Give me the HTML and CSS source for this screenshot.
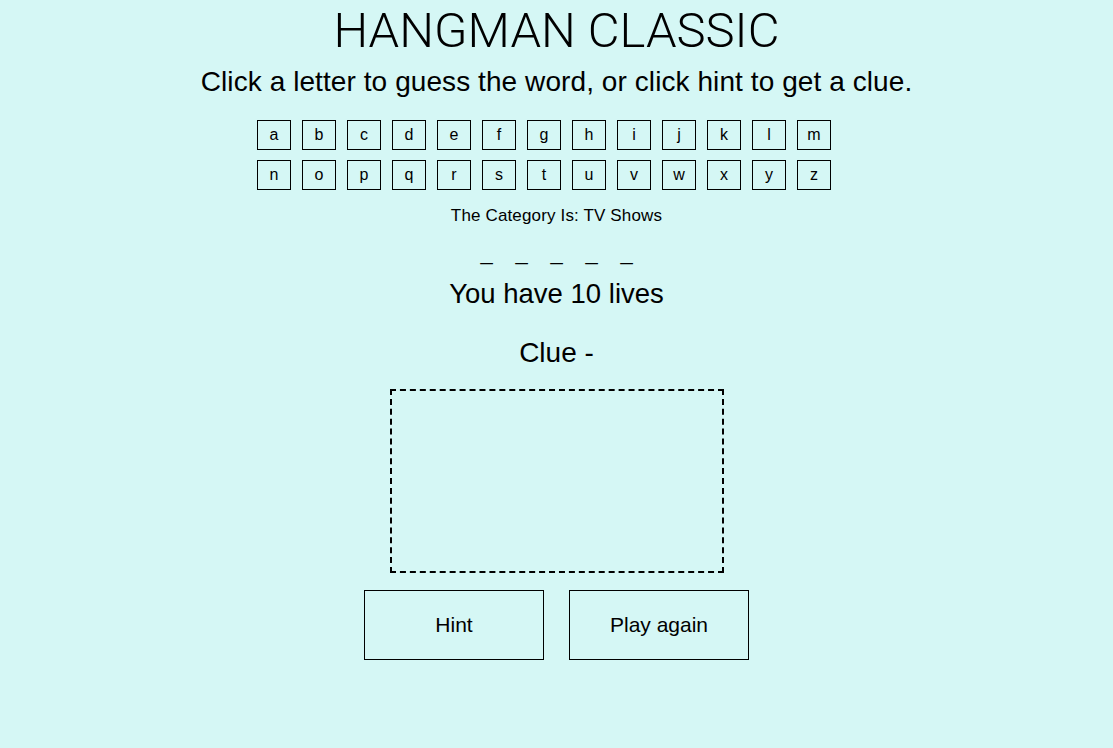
FILE: index.html
```html
<!DOCTYPE html>
<html lang="en">
<head>
<meta charset="utf-8">
<title>Hangman Classic</title>
<link rel="stylesheet" href="styles.css">
</head>
<body>
<div class="page">
  <h1 class="title">HANGMAN CLASSIC</h1>
  <p class="intro">Click a letter to guess the word, or click hint to get a clue.</p>
  <div class="alphabet">
    <ul class="letters">
      <li class="letter">a</li><li class="letter">b</li><li class="letter">c</li><li class="letter">d</li><li class="letter">e</li><li class="letter">f</li><li class="letter">g</li><li class="letter">h</li><li class="letter">i</li><li class="letter">j</li><li class="letter">k</li><li class="letter">l</li><li class="letter">m</li>
    </ul>
    <ul class="letters">
      <li class="letter">n</li><li class="letter">o</li><li class="letter">p</li><li class="letter">q</li><li class="letter">r</li><li class="letter">s</li><li class="letter">t</li><li class="letter">u</li><li class="letter">v</li><li class="letter">w</li><li class="letter">x</li><li class="letter">y</li><li class="letter">z</li>
    </ul>
  </div>
  <p class="category">The Category Is: TV Shows</p>
  <ul class="word">
    <li class="blank">_</li><li class="blank">_</li><li class="blank">_</li><li class="blank">_</li><li class="blank">_</li>
  </ul>
  <p class="lives">You have 10 lives</p>
  <p class="clue">Clue -</p>
  <div class="canvas"></div>
  <div class="actions">
    <button class="btn">Hint</button>
    <button class="btn">Play again</button>
  </div>
</div>
</body>
</html>
```

FILE: styles.css
```css
html, body {
  margin: 0;
  padding: 0;
  background: #d5f7f5;
}
body {
  font-family: "Liberation Sans", Arial, Helvetica, sans-serif;
  color: #000;
  height: 748px;
}
.page {
  display: flex;
  flex-direction: column;
  align-items: center;
}
.title {
  margin: 3px 0 0;
  font-family: Roboto, "Liberation Sans", Arial, sans-serif;
  font-size: 49px;
  font-weight: 300;
  line-height: 56px;
  letter-spacing: 0;
}
.intro {
  margin: 7px 0 0;
  font-size: 28px;
  line-height: 32px;
  letter-spacing: 0.08px;
}
.alphabet {
  display: flex;
  flex-direction: column;
  gap: 10px;
  margin-top: 22px;
  padding-right: 25px;
}
.letters {
  list-style: none;
  margin: 0;
  padding: 0;
  display: flex;
  gap: 11px;
}
.letter {
  width: 32px;
  height: 28px;
  border: 1px solid #000;
  display: flex;
  align-items: center;
  justify-content: center;
  font-size: 16px;
}
.category {
  margin: 16px 0 0;
  font-size: 17px;
  line-height: 20px;
  letter-spacing: 0.15px;
}
.word {
  list-style: none;
  margin: 17px 0 0;
  padding: 0;
  display: flex;
  gap: 19px;
  font-size: 22px;
  line-height: 20px;
}
.blank {
  width: 16px;
  text-align: center;
}
.lives {
  margin: 15px 0 0;
  font-size: 27.5px;
  line-height: 32px;
}
.clue {
  margin: 27px 0 0;
  font-size: 28px;
  line-height: 32px;
}
.canvas {
  margin-top: 20px;
  width: 330px;
  height: 180px;
  border: 2px dashed #000;
}
.actions {
  display: flex;
  gap: 25px;
  margin-top: 17px;
}
.btn {
  width: 180px;
  height: 70px;
  border: 1px solid #000;
  background: transparent;
  font-family: "Liberation Sans", Arial, Helvetica, sans-serif;
  font-size: 21px;
  color: #000;
  padding: 0;
}
```
